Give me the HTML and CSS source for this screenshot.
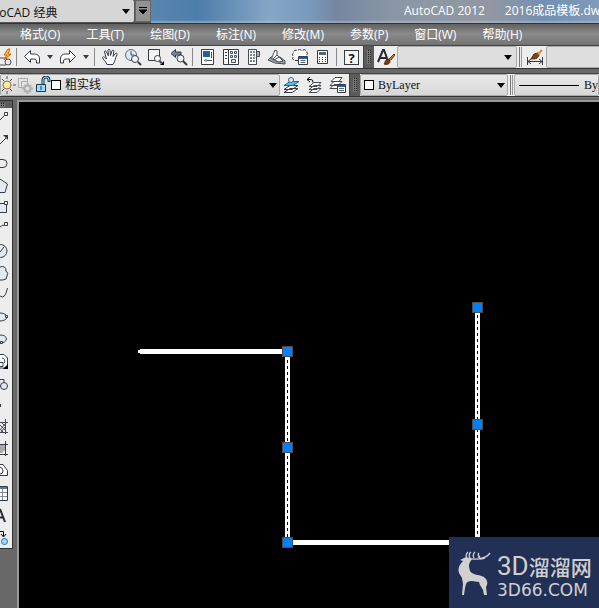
FILE: index.html
```
<!DOCTYPE html>
<html lang="zh-CN">
<head>
<meta charset="utf-8">
<title>AutoCAD 2012</title>
<link rel="stylesheet" href="styles.css">
</head>
<body>
<header class="titlebar">
  <div class="workspace">
    <select class="workspace-select" aria-label="工作空间"><option>AutoCAD 经典</option></select>
    <button class="workspace-more" aria-label="更多"><svg width="10" height="8"><path d="M1 .5h8M1 3h8L5 7z" fill="#000" stroke="#000" stroke-width="1"/></svg></button>
  </div>
  <div class="title"><span>AutoCAD 2012</span><span>2016成品模板.dwg</span></div>
</header>
<nav class="menu">
  <a href="#">格式(O)</a><a href="#">工具(T)</a><a href="#">绘图(D)</a><a href="#">标注(N)</a><a href="#">修改(M)</a><a href="#">参数(P)</a><a href="#">窗口(W)</a><a href="#">帮助(H)</a>
</nav>

<div class="toolbar">
  <div class="panel">
    <button class="tool clipped" aria-label="三维打印"><svg width="18" height="18"><path d="M1 10h9l3 3-3 4H1" fill="#eee" stroke="#4a4f59"/><circle cx="12" cy="14" r="3" fill="#eee" stroke="#4a4f59"/><path d="M12 1l-4 6h3l-3 5 7-6h-3l2-5z" fill="#ffb92a" stroke="#d8660b"/></svg></button>
    <i class="sep"></i>
    <button class="tool" aria-label="放弃"><svg width="18" height="18"><path d="M1.500 8.500l6-6V6h4q5 0 5 5v4h-3v-2q0-2-2-2h-4v3.500z" fill="#fff" stroke="#353a45"/></svg></button>
    <button class="drop" aria-label="放弃列表"><svg width="6" height="4"><path d="M0 0h6L3 4z" fill="#353a45"/></svg></button>
    <button class="tool" aria-label="重做"><svg width="18" height="18"><path d="M16.500 8.500l-6-6V6h-4q-5 0-5 5v4h3v-2q0-2 2-2h4v3.500z" fill="#fff" stroke="#353a45"/></svg></button>
    <button class="drop" aria-label="重做列表"><svg width="6" height="4"><path d="M0 0h6L3 4z" fill="#353a45"/></svg></button>
    <i class="sep"></i>
    <button class="tool" aria-label="平移"><svg width="18" height="18"><path d="M6 16.500c-1-3-4-5-4.500-7 1-1.500 2.500 0 4 1.500L3.500 4c0-1.500 1.500-1.500 2 0l2 4L7 2.500c0-1.500 2-1.500 2 0l.5 5L11 3c.5-1.500 2-1 1.800.3L12 8.500l2.500-3c1-1 2 0 1.500 1-2 4-1.500 6-4 10z" fill="#fff" stroke="#353a45"/></svg></button>
    <button class="tool" aria-label="实时缩放"><svg width="18" height="18"><circle cx="7" cy="7" r="5.500" fill="#dceaf3" stroke="#5c6874"/><path d="M7 3v4h3" fill="none" stroke="#35526e"/><circle cx="11" cy="11" r="3.500" fill="#eef4f8" stroke="#353a45"/><path d="M14 14l3 3" stroke="#353a45" stroke-width="2"/></svg></button>
    <button class="tool" aria-label="窗口缩放"><svg width="18" height="18"><path d="M1.500 1.500h11v11h-11z" fill="#f5f5f5" stroke="#353a45"/><circle cx="10.500" cy="10.500" r="3" fill="#fff" stroke="#353a45"/><path d="M12.500 13l2 2" stroke="#353a45" stroke-width="2"/><path d="M17 13v4h-4z"/></svg></button>
    <button class="tool" aria-label="缩放上一个"><svg width="18" height="18"><path d="M1 5.500l4.500-4v2.500H11v3H5.500v2.500z" fill="#78899a" stroke="#353a45"/><circle cx="10.500" cy="10.500" r="3.500" fill="#f4f8fa" stroke="#353a45"/><path d="M13 13l4 4" stroke="#353a45" stroke-width="2"/></svg></button>
    <i class="sep"></i>
    <button class="tool" aria-label="特性"><svg width="18" height="18"><path d="M2.500 1.500h12v15h-12z" fill="#fff" stroke="#353a45"/><path d="M4 3h7v6H4z" fill="#236099"/><path d="M12.500 4v6M5 12.500h1M8 12.500h5M7 11v3" stroke="#44546a"/></svg></button>
    <button class="tool" aria-label="设计中心"><svg width="18" height="18"><path d="M1.500 1.500h5v15h-5zM6.500 1.500h10v15h-10z" fill="#fff" stroke="#353a45"/><path d="M3 4.500h2M3 7.500h2M3 10.500h2" stroke="#353a45"/><path d="M8.500 3.500h2v2h-2zM12.500 3.500h2v2h-2zM8.500 7.500h2v2h-2zM12.500 7.500h2v2h-2zM9.500 11.500h4v3h-4z" fill="#dde4ec" stroke="#44546a"/></svg></button>
    <button class="tool" aria-label="工具选项板"><svg width="18" height="18"><path d="M3.500 1.500h8v15h-8z" fill="#fff" stroke="#454a55"/><path d="M11.500 3.500h3v5h-3z" fill="#a9b0b8" stroke="#454a55"/><path d="M5 4h2m1 0h2m-5 3h2m1 0h2m-5 3h2m1 0h2m-5 3h2m1 0h2" stroke="#7d838c" stroke-width="2"/></svg></button>
    <button class="tool" aria-label="图纸集"><svg width="18" height="18"><path d="M0 12l3-3h9l5 4v3l-10-1z" fill="#9ca2aa" stroke="#454a55"/><path d="M3.500 10.500L7 2l2 1v4l6 6-4 1z" fill="#fff" stroke="#454a55"/><path d="M9 7L5 11M6 12l5-3" stroke="#454a55"/></svg></button>
    <button class="tool" aria-label="标记集"><svg width="18" height="18"><path d="M8 12.500H4q-4-1-1.500-4Q0 6 2.500 5q0-4 4-2.500 2-2 4 0 4-2 5 1 2 2 0 4" fill="#fff" stroke="#353a45" stroke-dasharray="4 1"/><path d="M7.500 8.500h9v8h-9z" fill="#fff" stroke="#353a45"/><path d="M8 10h8" stroke="#236099" stroke-width="2"/><path d="M9.500 12.500h5M9.500 14.500h5" stroke="#596574"/></svg></button>
    <button class="tool" aria-label="快速计算器"><svg width="18" height="18"><path d="M3.500 2.500h10v13h-10z" fill="#fff" stroke="#353a45"/><path d="M5 5.500h7" stroke="#596574" stroke-width="3"/><path d="M5 9.500h7M5 11.500h7M5 13.500h7" stroke="#353a45" stroke-dasharray="1 2"/></svg></button>
    <i class="sep"></i>
    <button class="tool help" aria-label="帮助"><span>?</span></button>
  </div>
  <i class="grip"></i>
  <div class="panel fill">
    <button class="tool" aria-label="文字样式"><svg width="20" height="20"><path d="M2 15L7 3h1l4 11M4 11h7" fill="none" stroke="#252a32" stroke-width="2"/><path d="M8 17c1 0 1-5 4-5l2 2c0 3-3 4-6 3z" fill="#7b3d11" stroke="#52290c"/><path d="M13 12l5-5 1 1-4 5z" fill="#b97937" stroke="#70411c"/></svg></button>
    <select class="combo text-style" aria-label="文字样式列表"><option></option></select>
    <i class="split"></i>
    <button class="tool" aria-label="标注样式"><svg width="18" height="18"><path d="M1.500 9v8M16.500 9v8M2 13.500h14M5 11l-3 2.500L5 16M13 11l3 2.500-3 2.500" fill="none" stroke="#353a45"/><path d="M5 11l3-5 4-1 1 2c-1 4-4 4-8 4z" fill="#7d451b" stroke="#5c300e"/><path d="M12 6l4-4" stroke="#d68b32" stroke-width="2"/></svg></button>
    <select class="combo dim-style" aria-label="标注样式列表"><option></option></select>
  </div>
</div>

<div class="toolbar second">
  <div class="panel">
    <div class="layer combo-shell">
      <svg width="16" height="18"><path d="M6 0v3M6 15v3M0 9h-2M12 9h3M1 3l2 2M11 3L9 5M1 15l2-2M11 15l-2-2" stroke="#4c4c4c" stroke-width="1"/><circle cx="6" cy="9" r="4" fill="#ffe9a6" stroke="#8a733d"/></svg>
      <svg width="18" height="18"><path d="M1.500 2.500h9v9h-9zM4.500 5.500h6v6h-6z" fill="#e6e6e6" stroke="#aaa"/><circle cx="10.500" cy="12.500" r="3" fill="#ddd" stroke="#b0b0b0" stroke-width="2"/><path d="M10.500 7v2M10.500 16v2M5 12.500h2M14 12.500h2M7 9l1 1M13 15l1 1M14 9l-1 1M8 15l-1 1" stroke="#b0b0b0" stroke-width="2"/></svg>
      <svg width="16" height="18"><path d="M8 8V4q0-3 3-3t3 3v2" fill="none" stroke="#243e52" stroke-width="3"/><path d="M8 8V4q0-3 3-3t3 3v1" fill="none" stroke="#9dd1ed"/><path d="M1.500 8.500h9v7h-9z" fill="#9ddcff" stroke="#17384d"/><path d="M6 10v4" stroke="#17384d" stroke-width="1"/></svg>
      <i class="swatch"></i>
      <select class="bare" aria-label="图层"><option>粗实线</option></select>
    </div>
    <button class="tool" aria-label="将对象的图层置为当前"><svg width="18" height="18"><path d="M1 16.500h8l6-4H7zM1 13.500h8l6-4H7z" fill="#fff" stroke="#353a45"/><path d="M1 9.500h9l6-4H7z" fill="#5bbdf4" stroke="#076fae"/><circle cx="8" cy="4" r="2.500" fill="#dcecf5" stroke="#53616c"/></svg></button>
    <button class="tool" aria-label="上一个图层"><svg width="18" height="18"><path d="M3 16.500h8l4-4H8zM3 13.500h8l4-4H8zM3 10.500h8l4-4H8z" fill="#fff" stroke="#454a52"/><path d="M1 3.500h4q2 0 2 3M4 1L1 3.500 4 6" fill="none" stroke="#000"/></svg></button>
    <button class="tool" aria-label="图层状态管理器"><svg width="18" height="18"><path d="M1 12.500h8l4-4H5zM1 9.500h8l4-4H5zM2 5.500h8l3-4H6z" fill="#fff" stroke="#454a52"/><path d="M8.500 8.500h8v8h-8z" fill="#fff" stroke="#353a45"/><path d="M9 10h7" stroke="#236099" stroke-width="2"/><path d="M10 12.500h5M10 14.500h5" stroke="#596574"/></svg></button>
  </div>
  <i class="grip"></i>
  <div class="panel fill">
    <div class="color combo-shell"><i class="swatch"></i><select class="bare mono" aria-label="颜色"><option>ByLayer</option></select></div>
    <i class="split"></i>
    <div class="combo-shell linetype"><i class="rule"></i><select class="bare mono" aria-label="线型"><option>ByLayer</option></select></div>
  </div>
</div>

<main class="work">
  <aside class="side">
    <div class="draw">
      <i class="draw-grip"></i>
      <button aria-label="直线"><svg width="12" height="22"><path d="M0 12l5-5" stroke="#353a45"/><path d="M4.500 4.500h3v3h-3z" fill="#fff" stroke="#353a45"/></svg></button>
      <button aria-label="构造线"><svg width="12" height="22"><path d="M0 14l6-6" stroke="#353a45"/><path d="M3 5h5v5z" fill="#353a45"/></svg></button>
      <button aria-label="多段线"><svg width="12" height="22"><path d="M0 7.500h3q4 0 4 4t-4 4H0" fill="none" stroke="#353a45" stroke-width="1"/></svg></button>
      <button aria-label="正多边形"><svg width="12" height="22"><path d="M0 5l7.500 5L5 18.500H0" fill="#e4e8ef" stroke="#353a45"/></svg></button>
      <button aria-label="矩形"><svg width="12" height="22"><path d="M0 7.500h6.500v9H0" fill="#e4e8ef" stroke="#353a45"/><path d="M4.500 5.500h3v3h-3z" fill="#fff" stroke="#353a45"/></svg></button>
      <button aria-label="圆弧"><svg width="12" height="22"><path d="M0 9q2-2 5-2" fill="none" stroke="#353a45"/><path d="M4.500 4.500h3v3h-3z" fill="#fff" stroke="#353a45"/></svg></button>
      <button aria-label="圆"><svg width="12" height="22"><circle cx="0.500" cy="11" r="6.500" fill="#e4e8ef" stroke="#353a45"/><path d="M0 12l4-5" stroke="#353a45"/></svg></button>
      <button aria-label="修订云线"><svg width="12" height="22"><path d="M0 5q6-2 6 4 3 2 1 5 0 4-4 4H0" fill="#e4e8ef" stroke="#353a45"/></svg></button>
      <button aria-label="样条曲线"><svg width="12" height="22"><path d="M0 12q5 4 7.500-8" fill="none" stroke="#353a45"/></svg></button>
      <button aria-label="椭圆"><svg width="12" height="22"><ellipse cx="0" cy="11" rx="7" ry="4" fill="#e4e8ef" stroke="#353a45"/><path d="M5.500 9.500h2v2h-2z" fill="#fff" stroke="#353a45"/></svg></button>
      <button aria-label="椭圆弧"><svg width="12" height="22"><path d="M0 7q6 0 6.500 4-1 4-6.500 4" fill="#e4e8ef" stroke="#353a45"/><path d="M.5 13.500h2v2h-2z" fill="#fff" stroke="#353a45"/></svg></button>
      <button aria-label="插入块"><svg width="12" height="22"><path d="M0 4.500h4l3.500 3.500v10H0" fill="#fff" stroke="#353a45"/><path d="M0 12.500h3v4H0M2 8a3 3 0 0 1 2 5" fill="none" stroke="#353a45"/><path d="M8 14v5H3z"/></svg></button>
      <button aria-label="创建块"><svg width="12" height="22"><path d="M0 7.500h4v6H0" fill="#e4e8ef" stroke="#353a45"/><circle cx="4" cy="14" r="3.500" fill="#e4e8ef" stroke="#353a45"/></svg></button>
      <button aria-label="点"><svg width="12" height="22"><path d="M0 10h1v3H0z" fill="#353a45"/></svg></button>
      <button aria-label="图案填充"><svg width="12" height="22"><path d="M5.500 3v15M0 16.500h8M0 6.500h8M0 9l5 5M0 13l3 3M2 7l4 4M0 14l6-7M1 16l4-5" stroke="#454a55"/></svg></button>
      <button aria-label="渐变色"><svg width="12" height="22"><path d="M0 6h6v5l-4 4H0z" fill="#aaa"/><path d="M5.500 3v15M0 16.500h8M0 6.500h8" stroke="#353a45"/></svg></button>
      <button aria-label="面域"><svg width="12" height="22"><path d="M0 4.500h3l4.500 6v5H0" fill="#fff" stroke="#353a45"/><path d="M0 7q3 1 3 4t-3 3" fill="none" stroke="#353a45"/></svg></button>
      <button aria-label="表格"><svg width="12" height="22"><path d="M0 4.500h7.500v14H0" fill="#fff" stroke="#353a45"/><path d="M0 6h7" stroke="#65758a" stroke-width="2"/><path d="M0 10.500h7M0 14.500h7M2.500 7v11" stroke="#858b94"/></svg></button>
      <button aria-label="多行文字"><svg width="12" height="22"><path d="M0 5l5 13M0 13.500h3" fill="none" stroke="#252a32" stroke-width="2"/></svg></button>
      <button aria-label="添加选定对象"><svg width="12" height="22"><path d="M0 5.500h3.500V10M1 8l2.500 3L6 8" fill="none" stroke="#000"/><circle cx="4.500" cy="15.500" r="3" fill="#a1daff" stroke="#1676b7"/></svg></button>
    </div>
  </aside>
  <section class="canvas">
    <svg class="drawing" width="580" height="506" viewBox="19 102 580 506" shape-rendering="crispEdges">
      <path d="M138 350h2v-1h147v5H140v-1h-2zM285 352h5v190h-5zM287 540h193v5H287zM475 307h5v238h-5z" fill="#fff"/>
      <path d="M287.500 360v182M477.500 315v227" stroke="#000" stroke-dasharray="3 3"/>
      <g fill="#0080ff" stroke="#4d4d4d"><path d="M282.500 346.500h10v10h-10zM282.500 442.500h10v10h-10zM282.500 537.500h10v10h-10zM472.500 302.500h10v10h-10zM472.500 419.500h10v10h-10z"/></g>
    </svg>
    <div class="brand">
      <svg width="34" height="46" viewBox="0 0 34 46"><path d="M2 9l6-3 2 1 4 1-2 3q-2 3 0 9 2 3 8 4 6 1 8 4 2 3 1 6l-1 2 1 8h-3l-1-5-3-5-1-3-7-1q-5 0-6 3l-1 4-1 7H4l1-11-1-6-3-5q-2-6 4-12l-3-1z" fill="#d0d0d0"/><path d="M10 7c5 2 17 2 22-5M9 7Q7 4 10 1M12 7q-2-4 1-6M16 7q-2-3 1-6M20 6l3 2 4-1M22 6q-3-2-1-4" fill="none" stroke="#d0d0d0" stroke-width="1.300"/></svg>
      <div class="brand-text"><div class="brand-name"><span>3D</span>溜溜网</div><div class="brand-url">3D66.COM</div></div>
    </div>
  </section>
</main>
</body>
</html>
```
FILE: styles.css
```
* { box-sizing: border-box; }
html, body { height: 100%; }
body {
  margin: 0;
  display: flex;
  flex-direction: column;
  overflow: hidden;
  background: #686868;
  font: 12px/16px "Open Sans", "Noto Sans CJK SC", sans-serif;
  color: #111;
}
button, select { margin: 0; padding: 0; border: 0; background: none; font: inherit; color: inherit; }
svg { display: block; flex: none; }

.titlebar {
  flex: none;
  display: flex;
  align-items: flex-start;
  gap: 253px;
  height: 24px;
  border-bottom: 1px solid #333;
  background:
    linear-gradient(transparent 20px, #b5bfcb88 22px),
    linear-gradient(90deg, #5986b1 25%, #4d7da9 33%, #86a6c6 45%, #7899ba 52%, #7586a0 56%, #8b97a6 66%, #9297a2 82%, #7290b2 91%, #819bb8);
}
.workspace { flex: none; display: flex; justify-content: flex-end; width: 151px; height: 23px; overflow: hidden; background: #555; }
.workspace-select, .combo, .bare {
  appearance: none;
  background: url("data:image/svg+xml,%3Csvg xmlns='http://www.w3.org/2000/svg' width='8' height='5'%3E%3Cpath d='M0 0h8L4 5z'/%3E%3C/svg%3E") no-repeat right 4px center;
}
.workspace-select {
  flex: none;
  width: 158px;
  height: 22px;
  padding: 3px 0 0 4px;
  border-radius: 2px;
  background-color: #d6d6d6;
}
.workspace-more { flex: none; display: grid; place-items: center; width: 16px; height: 22px; margin-left: 1px; background: #929292; border: 1px solid #666; }
.title { flex: 1; min-width: 0; overflow: hidden; display: flex; gap: 20px; padding-top: 3px; white-space: nowrap; color: #fff; }

.menu {
  flex: none;
  display: flex;
  gap: 26px;
  height: 22px;
  padding: 3px 20px 0;
  background: linear-gradient(#606060, #8a8a8a 45%, #737373);
  border-bottom: 1px solid #424242;
}
.menu a { color: #fff; text-decoration: none; white-space: nowrap; }

.toolbar { flex: none; display: flex; height: 23px; background: #555; border-bottom: 1px solid #333; }
.second { margin-top: 4px; border-top: 1px solid #444; height: 24px; }
.panel { flex: none; display: flex; align-items: center; background: #ededed; border-right: 1px solid #444; }
.fill { flex: 1; min-width: 0; border: 0; overflow: hidden; }
.tool { flex: none; display: grid; place-items: center; width: 23px; height: 22px; }
.clipped { width: 14px; justify-content: end; overflow: hidden; }
.drop { flex: none; display: grid; place-items: center; width: 13px; height: 22px; }
.sep { flex: none; width: 6px; height: 18px; border-left: 2px solid transparent; background: linear-gradient(90deg, #888 1px, transparent 1px) padding-box; }
.split { flex: none; width: 6px; height: 20px; background: linear-gradient(90deg, transparent 2px, #777 2px, #777 3px, transparent 3px, transparent 4px, #999 4px, #999 5px, transparent 5px); }
.help span { width: 15px; height: 15px; border: 1px solid #353a45; background: #f7f7f7; font-weight: 700; font-size: 13px; line-height: 14px; }
.grip {
  flex: none;
  width: 10px;
  border: solid #5b5b5b;
  border-width: 4px 3px;
  background: conic-gradient(#222 25%, #777 0) 0 0 / 2px 2px;
}
.combo, .combo-shell { height: 22px; border: 1px solid #aaa; border-radius: 2px; background-color: #dedede; }
.combo-shell { display: flex; align-items: center; background: linear-gradient(#e9e9e9, #d7d7d7); }
.text-style { flex: none; width: 120px; }
.dim-style { flex: none; width: 140px; }
.layer { width: 280px; }
.color { width: 148px; padding-left: 3px; }
.linetype { flex: 1; min-width: 0; padding-left: 4px; }
.swatch { flex: none; width: 10px; height: 10px; border: 1px solid #000; background: #fff; }
.rule { flex: none; width: 60px; height: 1px; margin-right: 1px; background: #000; }
.bare { flex: 1; min-width: 60px; height: 20px; padding-left: 4px; background-position: right 2px center; }
.mono { font-family: "Liberation Serif", serif; }

.work { flex: 1; min-height: 0; display: flex; padding-top: 2px; border-top: 1px solid #777; }
.side { flex: none; width: 17px; }
.draw { width: 13px; display: flex; flex-direction: column; background: #ededed; border: solid #333; border-width: 1px 1px 1px 0; }
.draw-grip { flex: none; height: 7px; border: solid #5b5b5b; border-width: 2px 7px 1px 0; background: conic-gradient(#222 25%, #777 0) 0 0 / 2px 2px; }
.draw button { height: 22px; width: 12px; }
.canvas { position: relative; flex: 1; min-width: 0; overflow: hidden; background: #000; border: solid #999; border-width: 2px 0 0 2px; }
.brand { position: absolute; right: 0; bottom: 0; display: flex; gap: 5px; width: 150px; height: 71px; padding: 14px 0 0 9px; background: #223056; color: #d0d0d0; }
.brand-text { white-space: nowrap; }
.brand-name { display: flex; align-items: center; height: 30px; font: 500 21px/30px "Noto Sans CJK SC", sans-serif; }
.brand-name span { font: 26px/30px Roboto, sans-serif; }
.brand-url { font: 17px/18px "DejaVu Sans", sans-serif; }
```
